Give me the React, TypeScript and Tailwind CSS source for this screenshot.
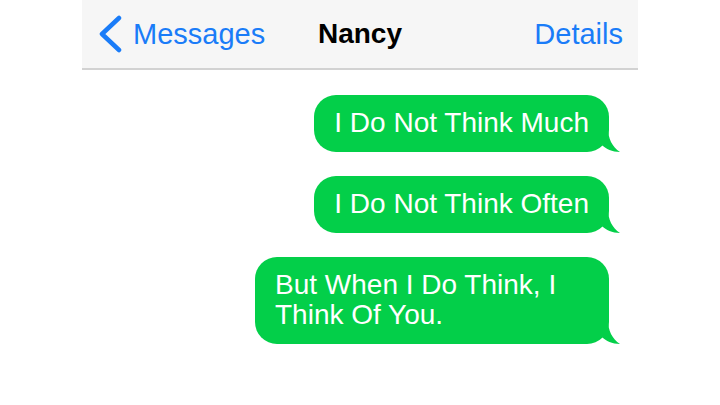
const messages = [
  "I Do Not Think Much",
  "I Do Not Think Often",
  "But When I Do Think, I Think Of You.",
];

const Bubble = ({ text }: { text: string }) => {
  return (
    <div className="relative max-w-[354px] rounded-[22px] bg-[#03cf49] px-5 pt-[13px] pb-[14px] text-[28px] leading-[30px] text-white">
      {text}
      {/* tail */}
      <svg
        className="absolute -right-[11px] bottom-0 h-[24px] w-[28px]"
        viewBox="0 0 28 24"
      >
        <path
          d="M0 0 H16 C16 10 20 19 28 24 C20 24 14 21 10 17 C6 20 2 20 0 20 Z"
          fill="#03cf49"
        />
      </svg>
    </div>
  );
};

const App = () => {
  return (
    <div
      className="flex h-[405px] w-[720px] justify-center bg-white"
      style={{ fontFamily: '"Liberation Sans", Arial, sans-serif' }}
    >
      <div className="flex w-[556px] flex-col">
        <div className="grid h-[70px] grid-cols-[1fr_auto_1fr] items-center border-b-2 border-[#d2d2d2] bg-[#f6f6f6] px-[15px]">
          <div className="flex items-center gap-[10px] text-[29px] leading-none text-[#1a7cf8]">
            <svg className="h-[38px] w-[26px]" viewBox="0 0 26 38">
              <polyline
                points="22,3 5,19 22,35"
                fill="none"
                stroke="#1a7cf8"
                strokeWidth="4.5"
                strokeLinecap="round"
                strokeLinejoin="round"
              />
            </svg>
            <span>Messages</span>
          </div>
          <div className="text-[28px] leading-none font-bold text-black">
            Nancy
          </div>
          <div className="text-right text-[29px] leading-none text-[#1a7cf8]">
            Details
          </div>
        </div>
        <div className="flex flex-col items-end gap-6 pt-[25px] pr-[29px]">
          {messages.map((m) => (
            <Bubble key={m} text={m} />
          ))}
        </div>
      </div>
    </div>
  );
};

export default App;
